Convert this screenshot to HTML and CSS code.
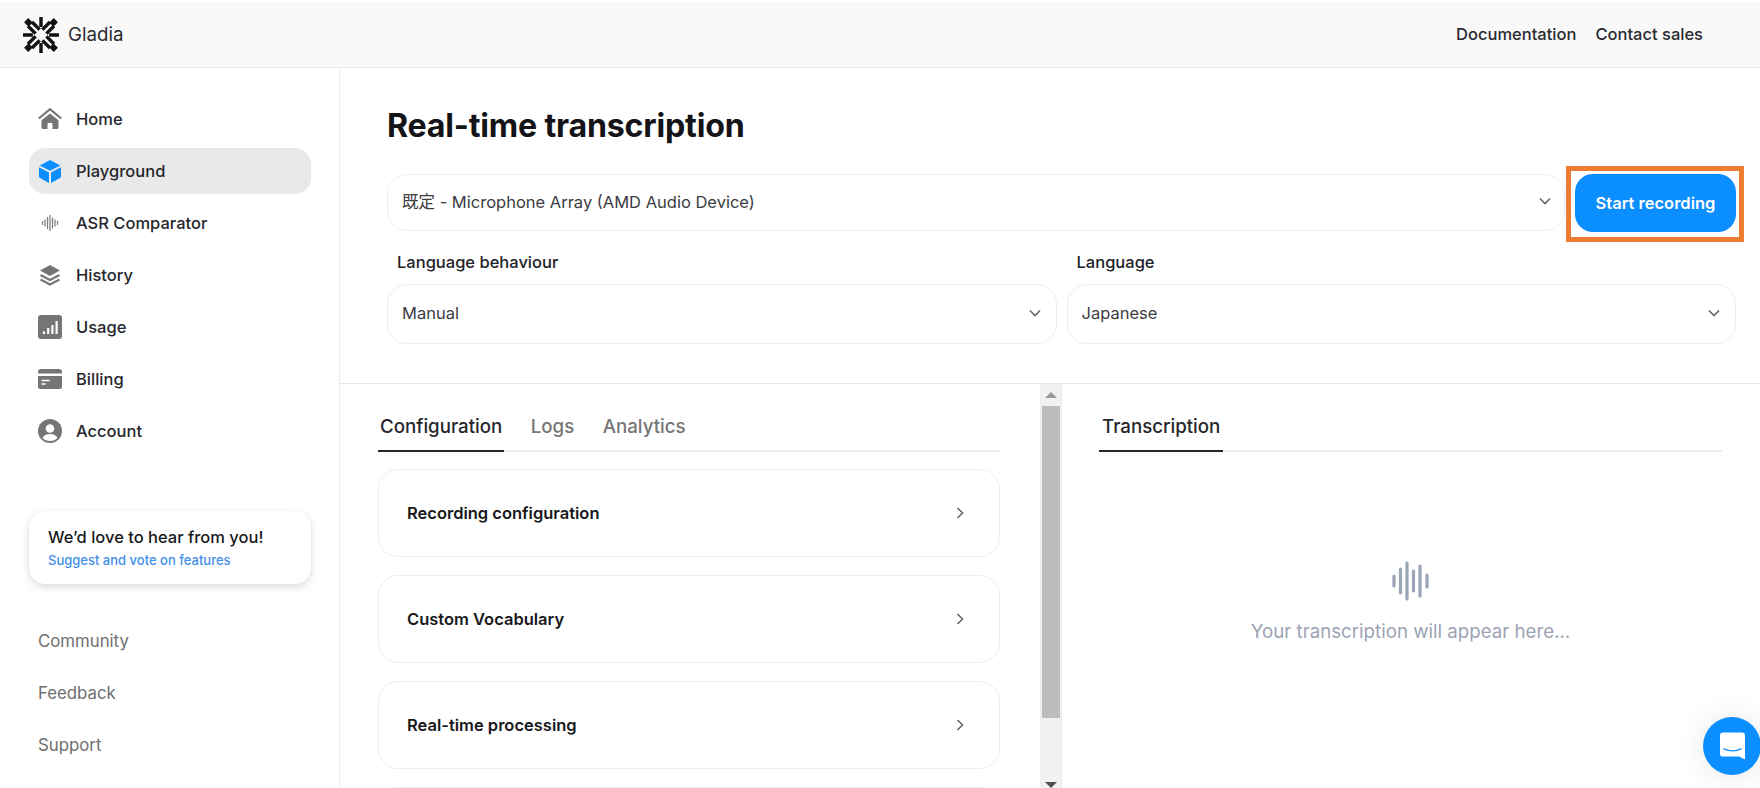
FILE: index.html
```html
<!DOCTYPE html>
<html lang="en">
<head>
<meta charset="utf-8">
<title>Gladia</title>
<link rel="stylesheet" href="styles.css">
</head>
<body>
<header class="topbar">
  <div class="brand">
    <svg class="logo" viewBox="-20 -20 40 40" fill="none" stroke="#111" stroke-width="3.800">
      <path d="M0-20V-9M0 20V9M-20 0H-9M20 0H9"/>
      <path d="M-16.500-16.500L-11.500-11.500M16.500-16.500L11.500-11.500M-16.500 16.500L-11.500 11.500M16.500 16.500L11.500 11.500" stroke-width="6.500"/>
      <path d="M-10-14.500L-1.500-6M10-14.500L1.500-6M-10 14.500L-1.500 6M10 14.500L1.500 6M-14.500-10L-6-1.500M-14.500 10L-6 1.500M14.500-10L6-1.500M14.500 10L6 1.500"/>
    </svg>
    <span>Gladia</span>
  </div>
  <nav class="toplinks"><a>Documentation</a><a>Contact sales</a></nav>
</header>
<div class="layout">
  <aside class="sidebar">
    <nav class="menu">
      <a class="item">
        <svg class="ico" viewBox="0 0 24 24" fill="#757575"><path d="M12 6.500l8.500 6.800v7.200a1.500 1.500 0 0 1-1.500 1.500h-4.500v-5a1 1 0 0 0-1-1h-3a1 1 0 0 0-1 1v5H5a1.500 1.500 0 0 1-1.500-1.500v-7.200z"/><path d="M.8 11.500L12 2.200l11.200 9.300" fill="none" stroke="#757575" stroke-width="2.200"/></svg>
        Home</a>
      <a class="item active">
        <svg class="ico" viewBox="0 0 24 24" fill="#0b8eff"><path d="M12 1l10.300 5.400L12 11.700 1.700 6.400z"/><path d="M1 8.300l10 5.100V24L2 19a2 2 0 0 1-1-1.700z"/><path d="M23 8.300l-10 5.100V24l9-5a2 2 0 0 0 1-1.700z"/></svg>
        Playground</a>
      <a class="item">
        <svg class="ico" viewBox="0 0 24 24" fill="none" stroke="#808080" stroke-width="1.300" stroke-linecap="round"><path d="M4.500 10.500v3M7 9v6M9.500 6.500v11M12 4.500v15M14.500 7v10M17 9v6M19.500 10.500v3"/></svg>
        ASR Comparator</a>
      <a class="item">
        <svg class="ico" viewBox="0 0 24 24"><path d="M12 2l10 5.500L12 13 2 7.500z" fill="#757575"/><path d="M2.500 12L12 17l9.500-5M2.500 16.500L12 21.500l9.500-5" fill="none" stroke="#757575" stroke-width="2"/></svg>
        History</a>
      <a class="item">
        <svg class="ico" viewBox="0 0 24 24"><rect width="24" height="24" rx="3" fill="#757575"/><path d="M6 19v-2.500M10.200 19v-6M14.400 19v-9M18.600 19V6" stroke="#fff" stroke-width="2.200"/></svg>
        Usage</a>
      <a class="item">
        <svg class="ico" viewBox="0 0 24 24" fill="#757575"><path d="M0 5a3 3 0 0 1 3-3h18a3 3 0 0 1 3 3v1.500H0z"/><path d="M0 9h24v10.500a2.500 2.500 0 0 1-2.500 2.500h-19A2.500 2.500 0 0 1 0 19.500z"/><path d="M3.500 13.500h8M3.500 17h4" stroke="#fff" stroke-width="1.600"/></svg>
        Billing</a>
      <a class="item">
        <svg class="ico" viewBox="0 0 24 24"><circle cx="12" cy="12" r="12" fill="#757575"/><circle cx="12" cy="9.500" r="4.300" fill="#fff"/><path d="M4.500 19c1.500-3 4-4 7.500-4s6 1 7.500 4c-2 2-4.500 3-7.500 3s-5.500-1-7.500-3z" fill="#fff"/></svg>
        Account</a>
    </nav>
    <div class="promo">
      <div class="promo-title">We’d love to hear from you!</div>
      <a class="promo-link">Suggest and vote on features</a>
    </div>
    <nav class="menu secondary">
      <a class="item">Community</a>
      <a class="item">Feedback</a>
      <a class="item">Support</a>
    </nav>
  </aside>
  <main class="main">
    <section class="controls">
      <h1>Real-time transcription</h1>
      <div class="device-row">
        <div class="select device">
          <span>既定 - Microphone Array (AMD Audio Device)</span>
          <svg class="chev" viewBox="0 0 16 16"><path d="M3 5.500l5 5 5-5"/></svg>
        </div>
        <div class="record-wrap">
          <button class="record">Start recording</button>
          <div class="annotation"></div>
        </div>
      </div>
      <div class="lang-grid">
        <div class="field">
          <label>Language behaviour</label>
          <div class="select"><span>Manual</span><svg class="chev" viewBox="0 0 16 16"><path d="M3 5.500l5 5 5-5"/></svg></div>
        </div>
        <div class="field">
          <label>Language</label>
          <div class="select"><span>Japanese</span><svg class="chev" viewBox="0 0 16 16"><path d="M3 5.500l5 5 5-5"/></svg></div>
        </div>
      </div>
    </section>
    <section class="panels">
      <div class="panel left">
        <div class="tabs">
          <span class="tab on">Configuration</span>
          <span class="tab">Logs</span>
          <span class="tab">Analytics</span>
        </div>
        <div class="card"><span>Recording configuration</span><svg class="chev right" viewBox="0 0 16 16"><path d="M5.500 3l5 5-5 5"/></svg></div>
        <div class="card"><span>Custom Vocabulary</span><svg class="chev right" viewBox="0 0 16 16"><path d="M5.500 3l5 5-5 5"/></svg></div>
        <div class="card"><span>Real-time processing</span><svg class="chev right" viewBox="0 0 16 16"><path d="M5.500 3l5 5-5 5"/></svg></div>
        <div class="card"></div>
      </div>
      <div class="scrollbar">
        <div class="sb-btn"><i class="arrow up"></i></div>
        <div class="sb-thumb"></div>
        <div class="sb-btn end"><i class="arrow down"></i></div>
      </div>
      <div class="panel right">
        <div class="tabs"><span class="tab on">Transcription</span></div>
        <div class="empty">
          <svg class="wave" viewBox="0 0 37 40" fill="none" stroke="#9aa5b8" stroke-width="3.200" stroke-linecap="round"><path d="M2 15v10M8.500 8v24M15 2v36M21.500 10v20M28 5v30M35 14v12"/></svg>
          <p>Your transcription will appear here...</p>
        </div>
      </div>
    </section>
  </main>
</div>
<button class="chat" aria-label="Chat">
  <svg viewBox="0 0 26 28"><path d="M3 0h20a3 3 0 0 1 3 3v25l-6-3H3a3 3 0 0 1-3-3V3a3 3 0 0 1 3-3z" fill="#fff"/><path d="M4 17c5.500 2.500 12.500 2.500 18 0" fill="none" stroke="#0b8eff" stroke-width="1.400" stroke-linecap="round"/></svg>
</button>
</body>
</html>
```
FILE: styles.css
```css
* { box-sizing: border-box; }
html, body { margin: 0; height: 788px; overflow: hidden; background: #fff; }
body { font-family: Inter, "Noto Sans CJK JP", sans-serif; color: #26262c; font-size: 16.5px; }

.topbar {
  margin-top: 2px; height: 66px; display: flex; align-items: center; justify-content: space-between;
  background: #f9f9f9; border-bottom: 1px solid #ececec; padding: 0 57px 0 23px;
}
.brand { display: flex; align-items: center; gap: 9px; font-size: 18.7px; color: #2a2a30; }
.logo { width: 36px; height: 36px; }
.toplinks { display: flex; gap: 19px; padding-bottom: 2px; font-weight: 500; color: #2a2a30; }

.layout { display: flex; height: 720px; }
.sidebar { width: 340px; flex: none; border-right: 1px solid #ececec; padding: 28px 28px 0 29px; }
.menu { display: flex; flex-direction: column; gap: 6px; }
.item { height: 46px; display: flex; align-items: center; gap: 14px; padding: 0 9px; border-radius: 16px; font-weight: 500; }
.item.active { background: #e9e9e9; }
.ico { width: 24px; height: 24px; flex: none; }
.promo {
  margin-top: 57px; height: 73px; padding: 15px 19px; border-radius: 16px; background: #fff;
  box-shadow: 0 3px 8px rgba(0,0,0,.14), 0 0 2px rgba(0,0,0,.06);
}
.promo-title { line-height: 22px; font-weight: 500; color: #18181b; }
.promo-link { display: block; margin-top: 2px; font-size: 13px; line-height: 20px; font-weight: 500; color: #3f8fea; }
.secondary { margin-top: 34px; }
.secondary .item { color: #6f6f6f; font-weight: 400; font-size: 16.8px; }

.main { flex: 1; min-width: 0; display: flex; flex-direction: column; }
.controls { padding: 38px 24px 39px 47px; border-bottom: 1px solid #e8e8e8; }
h1 { margin: 0 0 28px; font-size: 32.2px; line-height: 40px; font-weight: 700; letter-spacing: -.2px; color: #141418; }
.device-row { display: flex; align-items: center; gap: 10px; height: 58px; }
.select {
  flex: 1; height: 60px; display: flex; align-items: center; justify-content: space-between;
  padding: 0 13px 3px 14px; border: 1px solid #eeeeee; border-radius: 20px; color: #3c3c42; font-weight: 400;
}
.device { height: 57px; align-self: flex-start; padding: 0 11px 3px 14px; }
.chev { width: 16px; height: 16px; flex: none; }
.chev path { fill: none; stroke: #666; stroke-width: 1.600; }
.record-wrap { position: relative; flex: none; }
.record {
  display: block; width: 161px; height: 58px; border: 0; border-radius: 18px; background: #0b8eff; color: #fff;
  font: 600 16.5px Inter, sans-serif;
}
.annotation { position: absolute; inset: -8px -8px -10px -9px; border: 5px solid #ed7d31; pointer-events: none; }
.lang-grid { display: grid; grid-template-columns: 1fr 1fr; gap: 10px; margin-top: 18px; }
.field label { display: block; height: 24px; line-height: 24px; margin: 0 0 10px 10px; font-weight: 500; color: #222228; }

.panels { flex: 1; min-height: 0; display: flex; overflow: hidden; }
.panel { min-width: 0; }
.panel.left { width: 700px; flex: none; padding: 0 40px 0 38px; }
.panel.right { flex: 1; padding: 0 38px 0 37px; }
.tabs { height: 68px; display: flex; gap: 24.5px; align-items: flex-end; border-bottom: 2px solid #eee; }
.tab { height: 68px; margin-bottom: -2px; padding: 0 2px; line-height: 85px; font-size: 18.7px; font-weight: 500; color: #757575; }
.tab.on { color: #26262c; border-bottom: 2px solid #26262c; }
.panel.right .tab { padding: 0 3px; }
.card {
  height: 88px; margin-top: 18px; display: flex; align-items: center; justify-content: space-between;
  padding: 0 31px 0 28px; border: 1px solid #eeeeee; border-radius: 20px; font-weight: 600; color: #18181b;
}
.tabs + .card { margin-top: 17px; }
.scrollbar {
  width: 22px; flex: none; display: flex; flex-direction: column; align-items: center;
  background: #f1f1f1; border-left: 1px solid #eee; border-right: 1px solid #e8e8e8;
}
.sb-btn { height: 22px; flex: none; display: flex; align-items: center; justify-content: center; width: 100%; }
.sb-btn.end { margin-top: auto; align-items: flex-end; }
.sb-thumb { width: 18px; height: 312px; background: #bdbdbd; }
.arrow { display: block; width: 0; height: 0; border-left: 6px solid transparent; border-right: 6px solid transparent; }
.arrow.up { border-bottom: 6px solid #9a9a9a; }
.arrow.down { border-top: 6px solid #505050; }

.empty { display: flex; flex-direction: column; align-items: center; padding-top: 109px; }
.wave { width: 37px; height: 40px; }
.empty p { margin: 17px 0 0; font-size: 18.7px; line-height: 28px; color: #9ca3b4; }

.chat {
  position: fixed; left: 1703px; top: 717px; width: 58px; height: 58px; padding: 0; border: 0; border-radius: 50%;
  background: #0b8eff; display: flex; align-items: center; justify-content: center;
  box-shadow: 0 1px 30px rgba(0,0,0,.1);
}
.chat svg { width: 25px; height: 28px; }
```
